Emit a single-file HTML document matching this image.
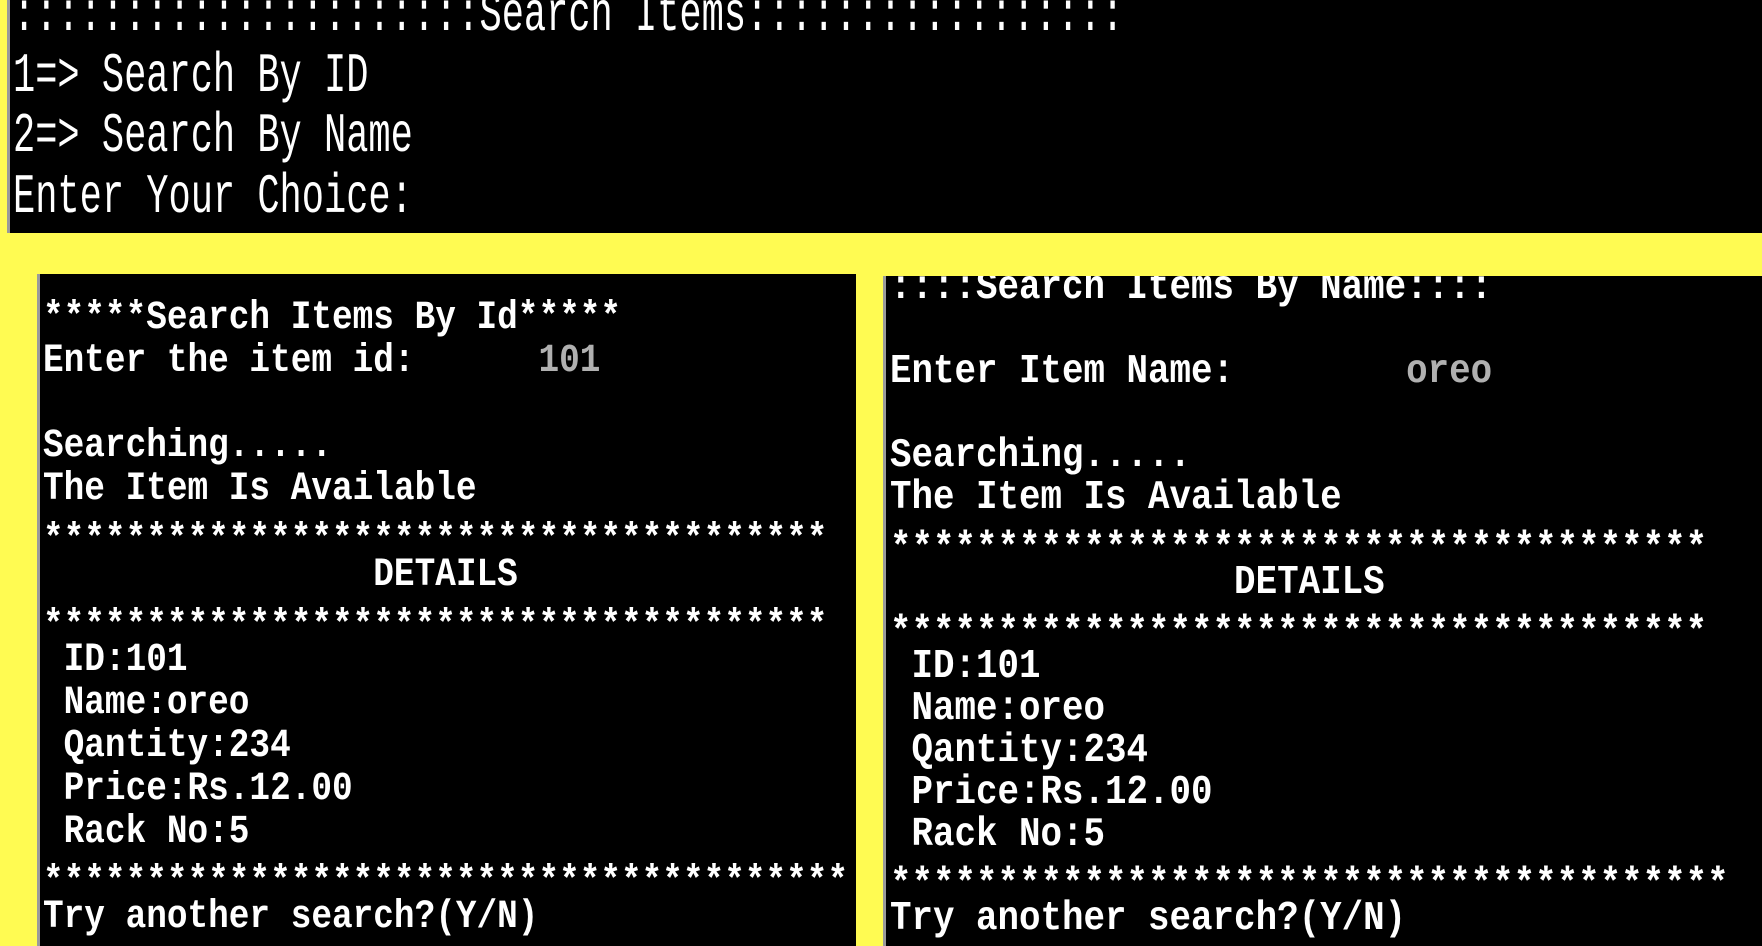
<!DOCTYPE html>
<html><head><meta charset="utf-8"><style>
html,body{margin:0;padding:0;width:1762px;height:946px;overflow:hidden;background:#fffb52;}
.p{position:absolute;background:#000;overflow:hidden;}
.p:before{content:"";position:absolute;left:0;top:0;bottom:0;width:3px;background:#9a9a9a;}
pre{position:absolute;margin:0;color:#fff;font-family:"Liberation Mono",monospace;transform-origin:0 0;white-space:pre;}
.g{color:#b0b0b0;}
.s{position:relative;top:8px;}
</style></head><body>
<div class="p" style="left:7px;top:0;width:1755px;height:233px;">
<pre style="left:6px;top:-15px;font-size:56px;line-height:60.7px;transform:scaleX(0.661);">:::::::::::::::::::::Search Items:::::::::::::::::
1=> Search By ID
2=> Search By Name
Enter Your Choice:</pre>
</div>
<div class="p" style="left:37px;top:274px;width:819px;height:672px;">
<pre style="left:6px;top:24px;font-size:40px;line-height:42.8px;font-weight:bold;transform:scaleX(0.86);">*****Search Items By Id*****
Enter the item id:      <span class="g">101</span>

Searching.....
The Item Is Available
<span class="s">**************************************</span>
                DETAILS
<span class="s">**************************************</span>
 ID:101
 Name:oreo
 Qantity:234
 Price:Rs.12.00
 Rack No:5
<span class="s">***************************************</span>
Try another search?(Y/N)</pre>
</div>
<div class="p" style="left:883px;top:276px;width:879px;height:670px;">
<pre style="left:7px;top:-9px;font-size:41px;line-height:42.1px;font-weight:bold;transform:scaleX(0.874);">::::Search Items By Name::::

Enter Item Name:        <span class="g">oreo</span>

Searching.....
The Item Is Available
<span class="s">**************************************</span>
                DETAILS
<span class="s">**************************************</span>
 ID:101
 Name:oreo
 Qantity:234
 Price:Rs.12.00
 Rack No:5
<span class="s">***************************************</span>
Try another search?(Y/N)</pre>
</div>
</body></html>
